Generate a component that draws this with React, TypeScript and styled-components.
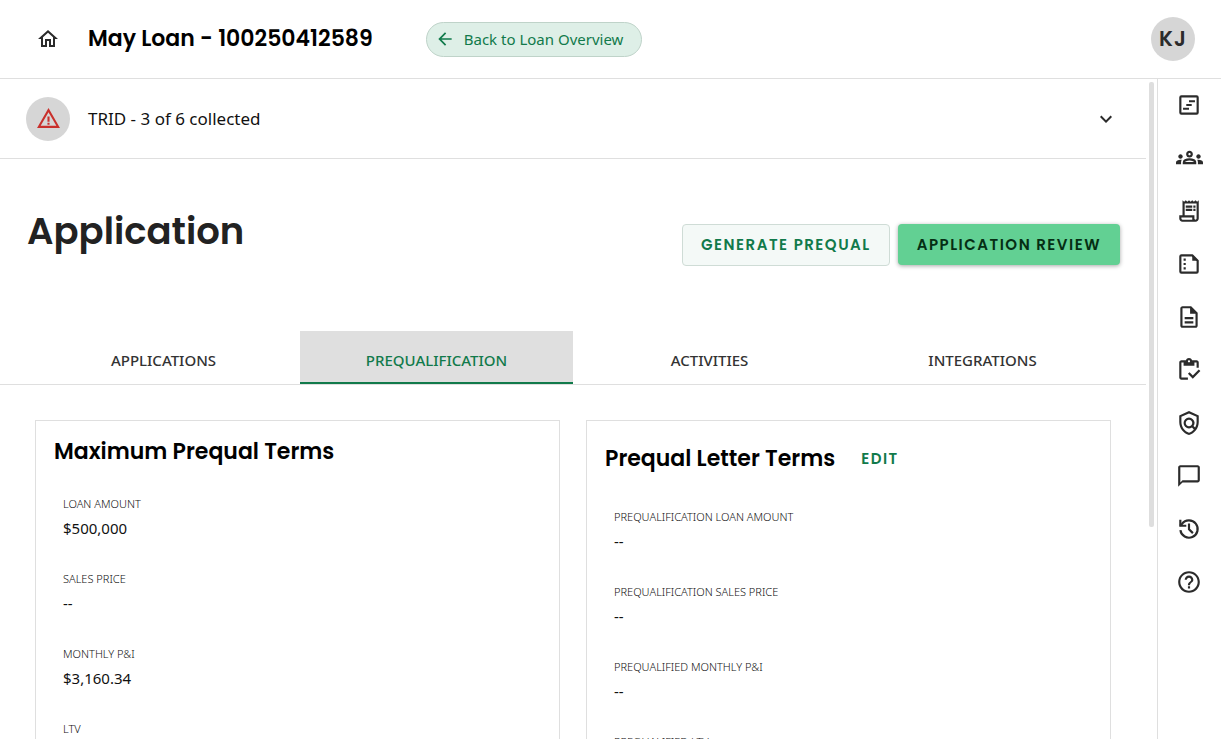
import React from "react";
import styled, { createGlobalStyle, css } from "styled-components";
import {
  MdArrowBack,
  MdExpandMore,
  MdHelpOutline,
  MdOutlineChatBubbleOutline,
  MdOutlineDescription,
  MdOutlineGroups,
  MdOutlineHome,
  MdOutlineInventory,
  MdOutlinePolicy,
  MdOutlineReceiptLong,
  MdWarningAmber,
} from "react-icons/md";

const heading = `Poppins, Inter, "Liberation Sans", sans-serif`;
const body = `"Segoe UI", "Noto Sans", "Open Sans", sans-serif`;
const green = "#117a4b";
const line = "#dfdfdf";
const ink = "#2b2b2b";

const GlobalStyle = createGlobalStyle`
  *, *::before, *::after { box-sizing: border-box; }
  body { margin: 0; background: #fff; color: #111; font-family: ${body}; }
  button { font: inherit; color: inherit; background: none; border: 0; padding: 0; cursor: pointer; }
  h1, h2, p, dl, dt, dd { margin: 0; }
`;

const Page = styled.div`
  display: flex;
  flex-direction: column;
  height: 100vh;
  overflow: hidden;
`;

const Header = styled.header`
  display: flex;
  align-items: center;
  flex: none;
  height: 79px;
  padding: 0 26px 0 36px;
  border-bottom: 1px solid ${line};
`;

const HomeLink = styled.a`
  display: flex;
  margin-right: 28px;
  color: ${ink};
`;

const LoanTitle = styled.h2`
  font: 600 22px/32px ${heading};
  color: #000;
  white-space: nowrap;
`;

const BackLink = styled.a`
  display: flex;
  align-items: center;
  gap: 9px;
  height: 35px;
  margin-left: 53px;
  padding: 0 18px 0 8px;
  border: 1px solid #bfd3c9;
  border-radius: 18px;
  background: #deefe7;
  color: ${green};
  font-size: 15px;
  text-decoration: none;
  white-space: nowrap;
`;

const Circle = styled.span`
  display: flex;
  align-items: center;
  justify-content: center;
  flex: none;
  width: 44px;
  height: 44px;
  border-radius: 50%;
  background: #d6d6d6;
`;

const UserButton = styled.button`
  margin-left: auto;
  font: 600 21px/24px ${heading};
  letter-spacing: 1px;
  color: ${ink};
`;

const Shell = styled.div`
  display: flex;
  flex: 1;
  min-height: 0;
`;

const Main = styled.main`
  flex: 1;
  min-width: 0;
  overflow: hidden;
`;

const ScrollRail = styled.div`
  flex: none;
  width: 11px;
  padding: 3px;
`;

const ScrollThumb = styled.div`
  width: 5px;
  height: 68%;
  border-radius: 2px;
  background: #dedede;
`;

const SideNav = styled.nav`
  display: flex;
  flex-direction: column;
  flex: none;
  width: 64px;
  padding-right: 1px;
  border-left: 1px solid ${line};
`;

const SideButton = styled.button`
  display: flex;
  align-items: center;
  justify-content: center;
  height: 53px;
  padding-bottom: 2px;
  color: ${ink};
`;

const Notice = styled.button`
  display: flex;
  align-items: center;
  gap: 18px;
  width: 100%;
  height: 80px;
  padding: 0 28px 0 26px;
  border-bottom: 1px solid ${line};
  text-align: left;
`;

const NoticeText = styled.span`
  flex: 1;
  font-size: 17px;
  line-height: 24px;
`;

const TitleRow = styled.div`
  display: flex;
  justify-content: space-between;
  align-items: flex-start;
  padding: 42px 26px 65px 27px;
`;

const PageTitle = styled.h1`
  font: 600 37px/60px ${heading};
  color: #222;
`;

const Actions = styled.div`
  display: flex;
  gap: 8px;
  padding-top: 23px;
`;

const ActionButton = styled.button<{ $primary?: boolean }>`
  height: 42px;
  padding: 0 18px;
  border: 1px solid #cfdcd6;
  border-radius: 4px;
  background: #f4f9f7;
  color: ${green};
  font: 600 15px/20px ${heading};
  letter-spacing: 0.1em;
  white-space: nowrap;
  ${(p) =>
    p.$primary &&
    css`
      height: 41px;
      padding: 0 19px;
      border: 0;
      background: #62d093;
      color: #052e14;
      box-shadow: 0 1px 4px rgba(0, 0, 0, 0.35);
    `}
`;

const Tabs = styled.div`
  display: grid;
  grid-template-columns: repeat(4, 1fr);
  padding: 0 27px;
  border-bottom: 1px solid ${line};
`;

const Tab = styled.button<{ $active?: boolean }>`
  height: 53px;
  padding-top: 7px;
  border-bottom: 2px solid ${(p) => (p.$active ? green : "transparent")};
  background: ${(p) => (p.$active ? "#dfdfdf" : "none")};
  color: ${(p) => (p.$active ? green : "#333")};
  font-size: 15px;
  font-weight: 500;
`;

const Cards = styled.div`
  display: grid;
  grid-template-columns: 1fr 1fr;
  gap: 26px;
  padding: 35px;
`;

const Card = styled.section`
  padding: 13px 18px;
  border: 1px solid ${line};
`;

const CardHead = styled.div<{ $tall?: boolean }>`
  display: flex;
  align-items: center;
  gap: 26px;
  height: ${(p) => (p.$tall ? "49px" : "36px")};
`;

const CardTitle = styled.h2`
  font: 600 22px/36px ${heading};
  color: #000;
`;

const EditButton = styled.button`
  font: 600 15px/20px ${heading};
  letter-spacing: 0.1em;
  color: ${green};
`;

const Fields = styled.dl`
  padding: 26px 9px 0;
`;

const Field = styled.div`
  height: 75px;
`;

const Label = styled.dt`
  font-size: 11px;
  line-height: 16px;
  font-weight: 300;
`;

const Value = styled.dd`
  margin-top: 4px;
  font-size: 15px;
  line-height: 24px;
`;

const PlanIcon = () => (
  <svg width="26" height="26" viewBox="0 0 24 24" fill="none" stroke="currentColor" strokeWidth="2" aria-hidden="true">
    <rect x="4" y="4" width="16" height="16" rx="1" />
    <path d="M12 8.500h5.500M9.500 12h5M6.500 15.500h5.500" strokeWidth="1.800" />
  </svg>
);

const NoteIcon = () => (
  <svg width="26" height="26" viewBox="0 0 24 24" aria-hidden="true">
    <path
      d="M5 4h10l5 5v10a1 1 0 0 1-1 1H5a1 1 0 0 1-1-1V5a1 1 0 0 1 1-1z"
      fill="none"
      stroke="currentColor"
      strokeWidth="2"
      strokeLinejoin="round"
    />
    <path d="M15 3.500l5.500 5.500h-5.500z" fill="currentColor" />
    <path d="M7 7h2v2H7zM7 11h2v2H7zM7 15h2v2H7z" fill="currentColor" />
  </svg>
);

const HistoryIcon = () => (
  <svg width="26" height="26" viewBox="0 0 24 24" fill="none" stroke="currentColor" strokeWidth="2" aria-hidden="true">
    <path d="M4.070 13a8 8 0 1 0 1.430-5.650L3.800 9" />
    <path d="M4 3.500V9h5.500M12 7v5.200l3.600 3.600" />
  </svg>
);

const sideItems = [
  { label: "Plan", icon: <PlanIcon /> },
  { label: "Contacts", icon: <MdOutlineGroups size={27} /> },
  { label: "Fees", icon: <MdOutlineReceiptLong size={26} /> },
  { label: "Notes", icon: <NoteIcon /> },
  { label: "Documents", icon: <MdOutlineDescription size={26} /> },
  { label: "Tasks", icon: <MdOutlineInventory size={26} /> },
  { label: "Compliance", icon: <MdOutlinePolicy size={26} /> },
  { label: "Messages", icon: <MdOutlineChatBubbleOutline size={26} /> },
  { label: "History", icon: <HistoryIcon /> },
  { label: "Help", icon: <MdHelpOutline size={26} /> },
];

const tabs = ["APPLICATIONS", "PREQUALIFICATION", "ACTIVITIES", "INTEGRATIONS"];

const maximumTerms = [
  ["LOAN AMOUNT", "$500,000"],
  ["SALES PRICE", "--"],
  ["MONTHLY P&I", "$3,160.34"],
  ["LTV", "--"],
];

const letterTerms = [
  ["PREQUALIFICATION LOAN AMOUNT", "--"],
  ["PREQUALIFICATION SALES PRICE", "--"],
  ["PREQUALIFIED MONTHLY P&I", "--"],
  ["PREQUALIFIED LTV", "--"],
];

const FieldList = ({ items }: { items: string[][] }) => (
  <Fields>
    {items.map(([label, value]) => (
      <Field key={label}>
        <Label>{label}</Label>
        <Value>{value}</Value>
      </Field>
    ))}
  </Fields>
);

export default function App() {
  return (
    <Page>
      <GlobalStyle />
      <Header>
        <HomeLink href="#home" aria-label="Home">
          <MdOutlineHome size={24} />
        </HomeLink>
        <LoanTitle>May Loan - 100250412589</LoanTitle>
        <BackLink href="#overview">
          <MdArrowBack size={20} />
          Back to Loan Overview
        </BackLink>
        <UserButton>
          <Circle>KJ</Circle>
        </UserButton>
      </Header>
      <Shell>
        <Main>
          <Notice aria-expanded={false}>
            <Circle>
              <MdWarningAmber size={25} color="#c9302c" />
            </Circle>
            <NoticeText>TRID - 3 of 6 collected</NoticeText>
            <MdExpandMore size={24} color={ink} />
          </Notice>
          <TitleRow>
            <PageTitle>Application</PageTitle>
            <Actions>
              <ActionButton>GENERATE PREQUAL</ActionButton>
              <ActionButton $primary>APPLICATION REVIEW</ActionButton>
            </Actions>
          </TitleRow>
          <Tabs role="tablist">
            {tabs.map((name) => {
              const active = name === "PREQUALIFICATION";
              return (
                <Tab key={name} role="tab" aria-selected={active} $active={active}>
                  {name}
                </Tab>
              );
            })}
          </Tabs>
          <Cards>
            <Card>
              <CardHead>
                <CardTitle>Maximum Prequal Terms</CardTitle>
              </CardHead>
              <FieldList items={maximumTerms} />
            </Card>
            <Card>
              <CardHead $tall>
                <CardTitle>Prequal Letter Terms</CardTitle>
                <EditButton>EDIT</EditButton>
              </CardHead>
              <FieldList items={letterTerms} />
            </Card>
          </Cards>
        </Main>
        <ScrollRail>
          <ScrollThumb />
        </ScrollRail>
        <SideNav aria-label="Loan tools">
          {sideItems.map((item) => (
            <SideButton key={item.label} aria-label={item.label}>
              {item.icon}
            </SideButton>
          ))}
        </SideNav>
      </Shell>
    </Page>
  );
}
